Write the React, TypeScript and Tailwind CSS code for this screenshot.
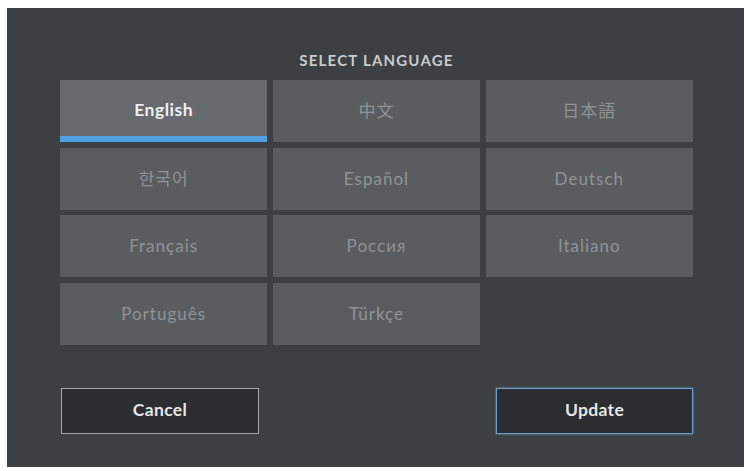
import React from "react";

const langs = [
  "English",
  "中文",
  "日本語",
  "한국어",
  "Español",
  "Deutsch",
  "Français",
  "Россия",
  "Italiano",
  "Português",
  "Türkçe",
];

export default function App() {
  return (
    <div
      className="w-[746px] h-[471px] bg-white overflow-hidden pt-[8px] pl-[7px]"
      style={{ fontFamily: "Lato, 'Noto Sans CJK SC', 'Noto Sans CJK JP', 'Noto Sans CJK KR', sans-serif" }}
    >
      <div className="w-[737px] h-[459px] bg-[#3d4043] pl-[53px] pr-[51px] pt-[43px] flex flex-col">
        <div className="h-[18px] leading-[18px] text-center text-[15px] font-bold tracking-[0.08em] text-[#c9cbcd]">
          SELECT LANGUAGE
        </div>
        <div className="mt-[11px] grid grid-cols-3 gap-x-[5.5px] gap-y-[5.5px] auto-rows-[62px]">
          {langs.map((l, i) =>
            i === 0 ? (
              <div key={l} className="relative bg-[#676a6e] flex items-center justify-center pb-[2px]">
                <span className="text-[17.5px] font-bold tracking-[0.03em] text-[#eeeeee]">{l}</span>
                <div className="absolute left-0 right-0 bottom-0 h-[6px] bg-[#4f9fe2]" />
              </div>
            ) : (
              <div key={l} className="bg-[#5a5d60] flex items-center justify-center">
                <span className="text-[17px] tracking-[0.06em] text-[#909396]">{l}</span>
              </div>
            )
          )}
        </div>
        <div className="mt-[43px] flex justify-between">
          <button className="w-[198px] h-[46px] ml-[1px] bg-[#2b2d30] border-[1.5px] border-[#a3a5a7] text-[17.5px] font-bold tracking-[0.02em] text-[#e6e6e6]">
            Cancel
          </button>
          <button className="w-[197px] h-[46px] bg-[#2b2d30] border-[1.5px] border-[#6f9fc9] shadow-[0_0_2px_#6f9fc9] text-[17.5px] font-bold tracking-[0.02em] text-[#e6e6e6]">
            Update
          </button>
        </div>
      </div>
    </div>
  );
}
